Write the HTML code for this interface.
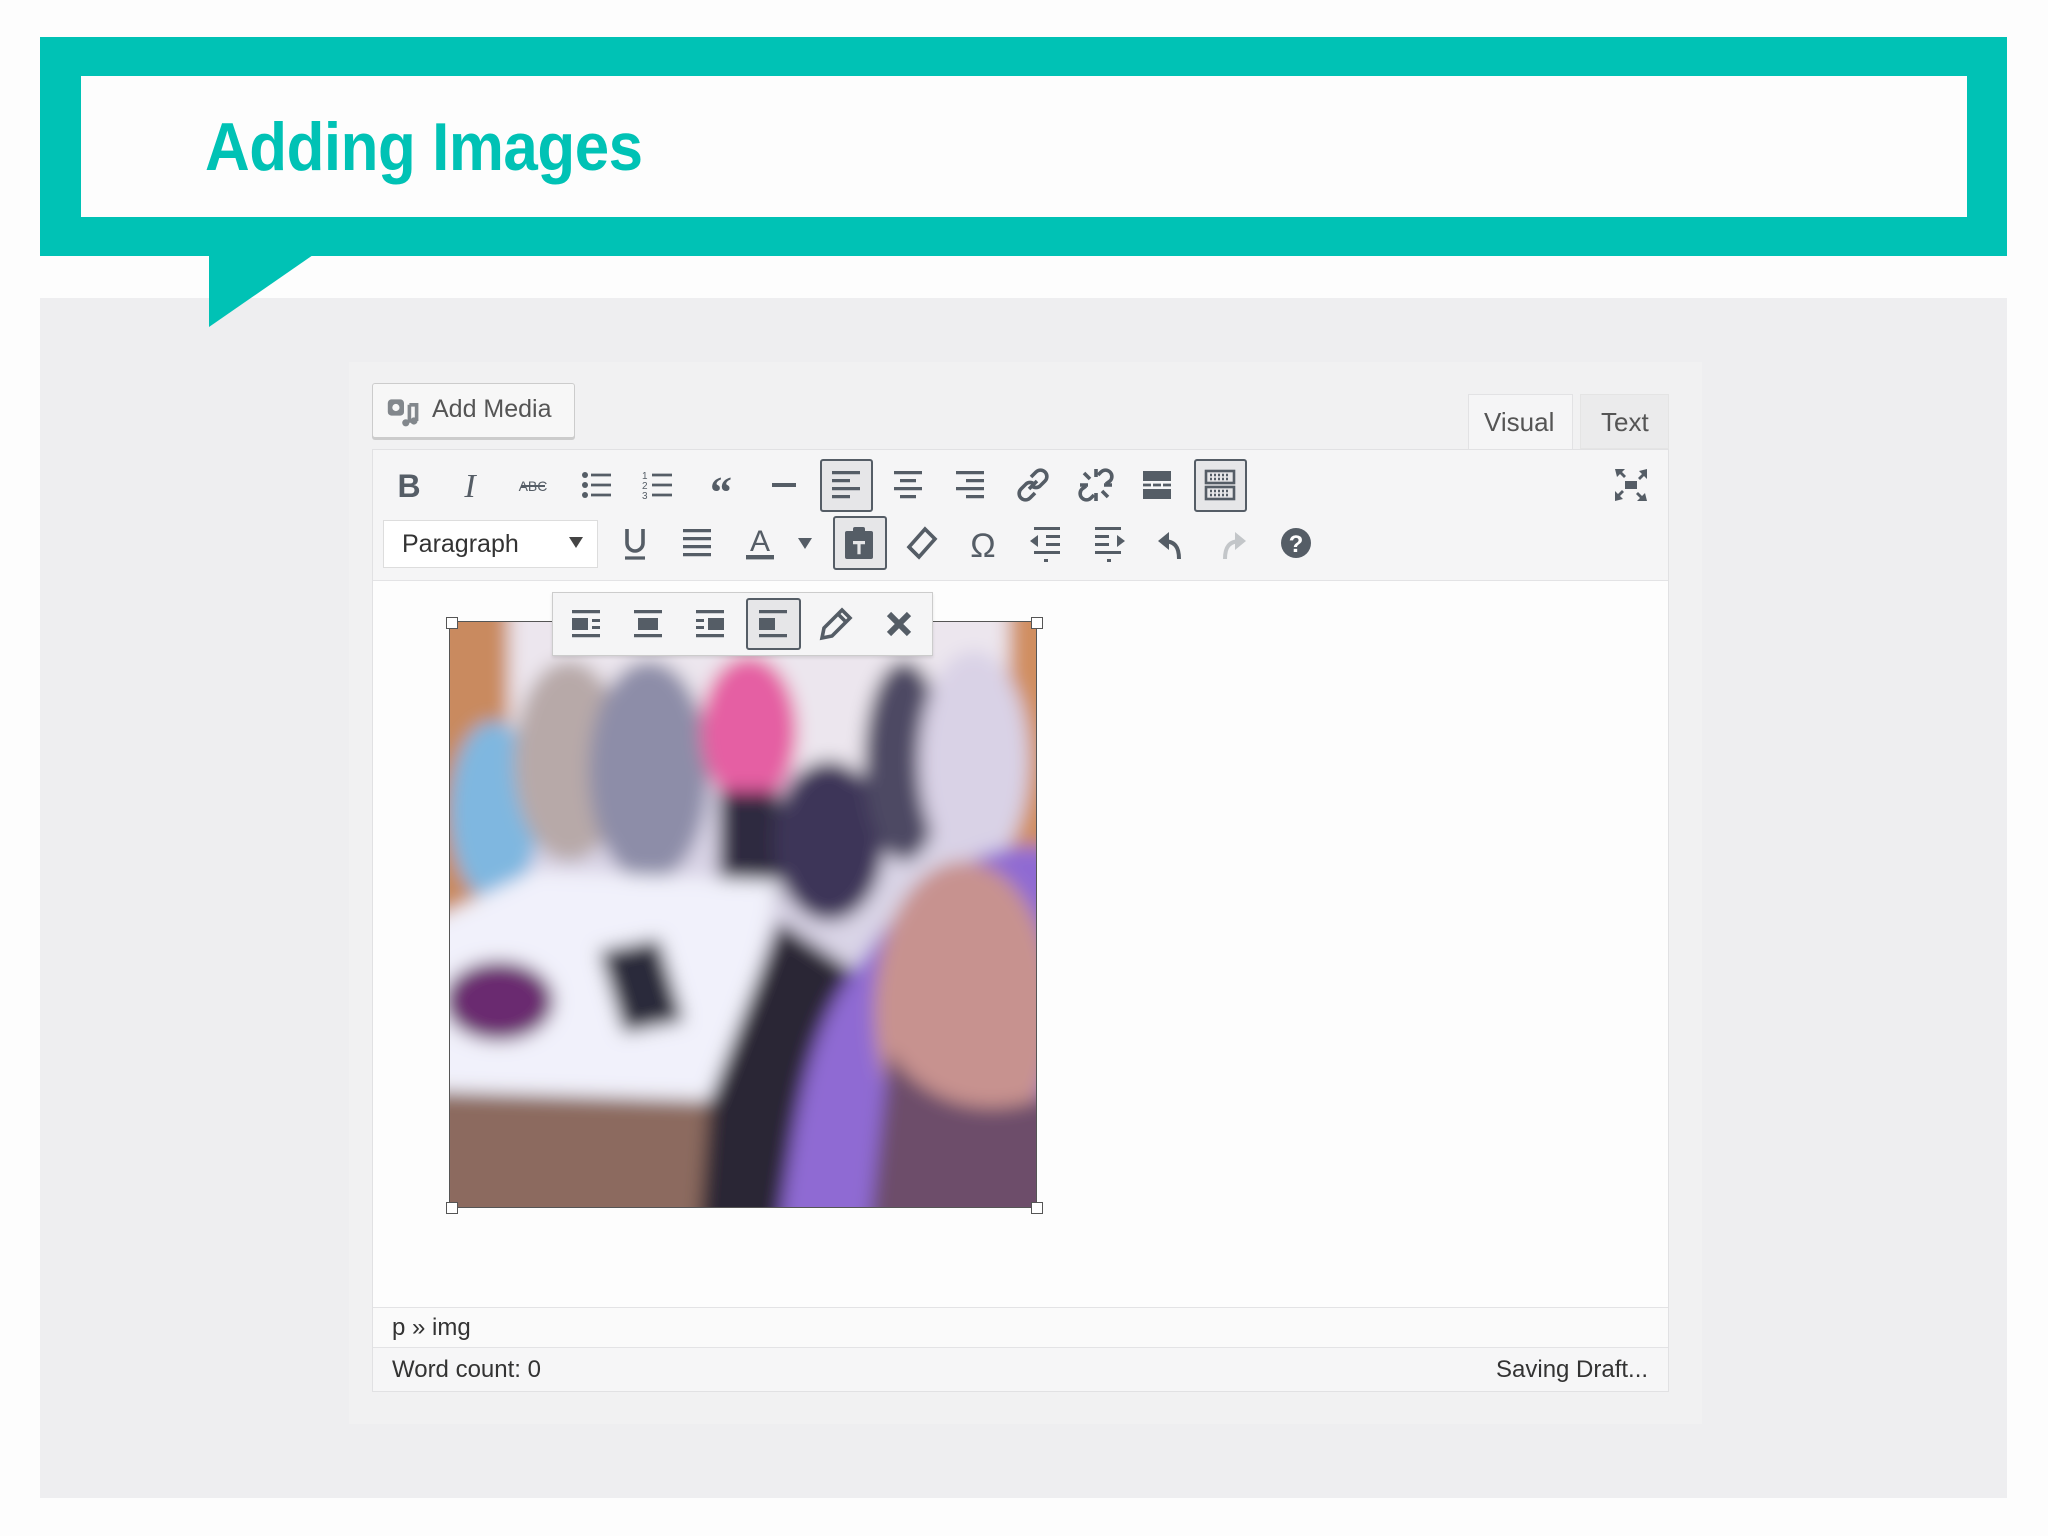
<!DOCTYPE html>
<html><head><meta charset="utf-8"><style>
*{margin:0;padding:0;box-sizing:border-box}
body{width:2048px;height:1536px;background:#fdfdfd;position:relative;overflow:hidden;font-family:"Liberation Sans",sans-serif;color:#32373c}
.a{position:absolute}
.ic{position:absolute;width:40px;height:40px;margin-left:-20px;margin-top:-20px}
.ic svg{width:40px;height:40px;display:block}
.btn{position:absolute;border:2px solid #555d66;border-radius:3px;background:#e6e6e8}
</style></head><body>
<div class="a" style="left:40px;top:298px;width:1967px;height:1200px;background:#eeeef0"></div>
<div class="a" style="left:40px;top:37px;width:1967px;height:219px;background:#00c2b5"></div>
<div class="a" style="left:81px;top:76px;width:1886px;height:141px;background:#fdfdfd"></div>
<svg class="a" style="left:209px;top:255px" width="106" height="73"><polygon points="0,0 104,0 0,72" fill="#00c2b5"/></svg>
<div class="a" style="left:205px;top:108px;font-size:68px;font-weight:bold;color:#00c2b5;transform:scaleX(0.91);transform-origin:left top;letter-spacing:-0.5px">Adding Images</div>

<div class="a" style="left:349px;top:362px;width:1353px;height:1062px;background:#f1f1f2"></div>

<!-- Add Media -->
<div class="a" style="left:372px;top:383px;width:203px;height:55px;border:1px solid #ccc;border-radius:3px;background:#f7f7f7;box-shadow:0 2px 0 #ccc"></div>
<svg class="a" style="left:386px;top:394px" width="36" height="36" viewBox="0 0 20 20"><rect x="1" y="3" width="9" height="9" rx="2" fill="#82878c"/><circle cx="5.5" cy="7.5" r="2" fill="#f7f7f7"/><path d="M13 6v10M13 6h4v9" stroke="#82878c" stroke-width="2" fill="none"/><circle cx="11" cy="16" r="2" fill="#82878c"/><circle cx="15.5" cy="15" r="2" fill="#82878c"/></svg>
<div class="a" style="left:432px;top:395px;font-size:25px;color:#555">Add Media</div>

<!-- tabs -->
<div class="a" style="left:1468px;top:394px;width:105px;height:58px;background:#f5f5f6;border:1px solid #e2e2e4;border-bottom:none"></div>
<div class="a" style="left:1484px;top:407px;font-size:26px;color:#555">Visual</div>
<div class="a" style="left:1580px;top:394px;width:89px;height:55px;background:#ebebec;border:1px solid #e4e4e4"></div>
<div class="a" style="left:1601px;top:407px;font-size:26px;color:#555">Text</div>

<!-- editor -->
<div class="a" style="left:372px;top:449px;width:1297px;height:943px;border:1px solid #e1e1e3;background:#f5f5f6"></div>
<div class="a" style="left:373px;top:580px;width:1295px;height:727px;background:#fdfdfd;border-top:1px solid #e3e3e5"></div>
<div class="a" style="left:373px;top:1307px;width:1295px;height:40px;border-top:1px solid #e3e3e5;background:#fafafa"></div>
<div class="a" style="left:392px;top:1314px;font-size:24px;color:#333">p » img</div>
<div class="a" style="left:373px;top:1347px;width:1295px;height:44px;border-top:1px solid #e3e3e5;background:#f6f6f7"></div>
<div class="a" style="left:392px;top:1356px;font-size:24px;color:#333">Word count: 0</div>
<div class="a" style="left:1496px;top:1356px;font-size:24px;color:#333">Saving Draft...</div>

<!-- row1 -->
<div class="btn" style="left:820px;top:459px;width:53px;height:53px"></div>
<div class="btn" style="left:1194px;top:459px;width:53px;height:53px"></div>
<div class="ic" style="left:409px;top:485px"><svg viewBox="0 0 20 20"><text x="10" y="16" text-anchor="middle" font-family="Liberation Sans" font-weight="bold" font-size="16" fill="#555d66">B</text></svg></div>
<div class="ic" style="left:470px;top:485px"><svg viewBox="0 0 20 20"><text x="10" y="16" text-anchor="middle" font-family="Liberation Serif" font-style="italic" font-size="17" fill="#555d66">I</text></svg></div>
<div class="ic" style="left:533px;top:485px"><svg viewBox="0 0 20 20"><text x="10" y="13" text-anchor="middle" font-family="Liberation Sans" font-size="7" fill="#555d66">ABC</text><path d="M4 10.5h12" stroke="#555d66" stroke-width="1"/></svg></div>
<div class="ic" style="left:597px;top:485px"><svg viewBox="0 0 20 20" fill="#555d66"><circle cx="4" cy="5" r="1.5"/><circle cx="4" cy="10" r="1.5"/><circle cx="4" cy="15" r="1.5"/><path d="M7 4.3h10v1.4H7zM7 9.3h10v1.4H7zM7 14.3h10v1.4H7z"/></svg></div>
<div class="ic" style="left:658px;top:485px"><svg viewBox="0 0 20 20" fill="#555d66"><text x="2" y="7" font-size="5" font-family="Liberation Sans">1</text><text x="2" y="12" font-size="5" font-family="Liberation Sans">2</text><text x="2" y="17" font-size="5" font-family="Liberation Sans">3</text><path d="M7 4.3h10v1.4H7zM7 9.3h10v1.4H7zM7 14.3h10v1.4H7z"/></svg></div>
<div class="ic" style="left:721px;top:485px"><svg viewBox="0 0 20 20"><text x="10" y="21" text-anchor="middle" font-family="Liberation Serif" font-weight="bold" font-size="22" fill="#555d66">“</text></svg></div>
<div class="ic" style="left:784px;top:485px"><svg viewBox="0 0 20 20"><path d="M4 10h12" stroke="#555d66" stroke-width="2"/></svg></div>
<div class="ic" style="left:846px;top:485px"><svg viewBox="0 0 20 20" fill="#555d66"><path d="M3 3h14v1.6H3zM3 7h9v1.6H3zM3 11h14v1.6H3zM3 15h9v1.6H3z"/></svg></div>
<div class="ic" style="left:908px;top:485px"><svg viewBox="0 0 20 20" fill="#555d66"><path d="M3 3h14v1.6H3zM6 7h8v1.6H6zM3 11h14v1.6H3zM6 15h8v1.6H6z"/></svg></div>
<div class="ic" style="left:970px;top:485px"><svg viewBox="0 0 20 20" fill="#555d66"><path d="M3 3h14v1.6H3zM8 7h9v1.6H8zM3 11h14v1.6H3zM8 15h9v1.6H8z"/></svg></div>
<div class="ic" style="left:1033px;top:485px"><svg viewBox="0 0 20 20" fill="none" stroke="#555d66" stroke-width="1.8"><path d="M9 6l2.5-2.5a3 3 0 014.5 4.5L13.5 10.5a3 3 0 01-4 0"/><path d="M11 14l-2.5 2.5a3 3 0 01-4.5-4.5L6.5 9.5a3 3 0 014 0"/><path d="M8 12l4-4"/></svg></div>
<div class="ic" style="left:1096px;top:485px"><svg viewBox="0 0 20 20" fill="none" stroke="#555d66" stroke-width="1.8"><path d="M11 5l1.5-1.5a3 3 0 014.5 4.5L15 9.5"/><path d="M9 15l-1.5 1.5a3 3 0 01-4.5-4.5L5 10.5"/><path d="M10 2v4M2 10h4M18 10h-4M10 18v-4M4 4l3 3M16 16l-3-3"/></svg></div>
<div class="ic" style="left:1157px;top:485px"><svg viewBox="0 0 20 20" fill="#555d66"><path d="M3 3h14v5H3zM3 9.3h4v1.4H3zM8 9.3h4v1.4H8zM13 9.3h4v1.4h-4zM3 12h14v5H3z"/></svg></div>
<div class="ic" style="left:1220px;top:485px"><svg viewBox="0 0 20 20" fill="none" stroke="#555d66" stroke-width="1.3"><rect x="3" y="3" width="14" height="6"/><rect x="3" y="11" width="14" height="6"/><path d="M5 5h10M5 7h10M5 13h10M5 15h10" stroke-dasharray="1 1"/></svg></div>
<div class="ic" style="left:1631px;top:485px"><svg viewBox="0 0 20 20" fill="#555d66"><rect x="7" y="8" width="6" height="4"/><path d="M2 2h5l-1.5 1.5 2 2-1 1-2-2L3 6zM18 2v5l-1.5-1.5-2 2-1-1 2-2L14 3zM2 18v-5l1.5 1.5 2-2 1 1-2 2L6 17zM18 18h-5l1.5-1.5-2-2 1-1 2 2L17 14z"/></svg></div>

<!-- row2 -->
<div class="a" style="left:383px;top:520px;width:215px;height:48px;border:1px solid #ddd;background:#fff"></div>
<div class="a" style="left:402px;top:530px;font-size:25px;color:#333">Paragraph</div>
<div class="a" style="left:569px;top:537px;width:0;height:0;border-left:7px solid transparent;border-right:7px solid transparent;border-top:11px solid #444"></div>
<div class="btn" style="left:833px;top:516px;width:54px;height:54px"></div>
<div class="ic" style="left:635px;top:543px"><svg viewBox="0 0 20 20" fill="none" stroke="#555d66" stroke-width="1.8"><path d="M6 3v7a4 4 0 008 0V3"/><path d="M5 17.5h10" stroke-width="1.6"/></svg></div>
<div class="ic" style="left:697px;top:543px"><svg viewBox="0 0 20 20" fill="#555d66"><path d="M3 3h14v1.6H3zM3 7h14v1.6H3zM3 11h14v1.6H3zM3 15h14v1.6H3z"/></svg></div>
<div class="ic" style="left:760px;top:543px"><svg viewBox="0 0 20 20"><text x="10" y="14" text-anchor="middle" font-family="Liberation Sans" font-size="15" fill="#555d66">A</text><rect x="3" y="16" width="14" height="2.2" fill="#555d66"/></svg></div>
<div class="a" style="left:798px;top:538px;width:0;height:0;border-left:7px solid transparent;border-right:7px solid transparent;border-top:11px solid #555d66"></div>
<div class="ic" style="left:859px;top:543px"><svg viewBox="0 0 20 20" fill="#555d66"><rect x="3" y="4" width="14" height="14" rx="1"/><rect x="7" y="2" width="6" height="4" rx="1"/><path d="M7 9h6v1.6H10.8v5H9.2v-5H7z" fill="#e6e6e8"/></svg></div>
<div class="ic" style="left:921px;top:543px"><svg viewBox="0 0 20 20" fill="none" stroke="#555d66" stroke-width="1.8"><path d="M12 3l5 5-8 9-5-5z"/><path d="M4 12l5 5" /></svg></div>
<div class="ic" style="left:983px;top:543px"><svg viewBox="0 0 20 20"><text x="10" y="17" text-anchor="middle" font-family="Liberation Sans" font-size="17" fill="#555d66">Ω</text></svg></div>
<div class="ic" style="left:1046px;top:543px"><svg viewBox="0 0 20 20" fill="#555d66"><path d="M4 2h13v1.5H4zM10 6h7v1.5h-7zM10 10h7v1.5h-7zM4 14h13v1.5H4zM9 18h2v1.5H9zM2 9l4-3v6z"/></svg></div>
<div class="ic" style="left:1109px;top:543px"><svg viewBox="0 0 20 20" fill="#555d66"><path d="M3 2h13v1.5H3zM3 6h7v1.5H3zM3 10h7v1.5H3zM3 14h13v1.5H3zM9 18h2v1.5H9zM18 9l-4-3v6z"/></svg></div>
<div class="ic" style="left:1171px;top:543px"><svg viewBox="0 0 20 20" fill="none" stroke="#555d66" stroke-width="2"><path d="M14 18c0-6-2-9-8-9"/><path d="M9 4.5L3.5 9 9 13.5z" fill="#555d66" stroke="none"/></svg></div>
<div class="ic" style="left:1233px;top:543px"><svg viewBox="0 0 20 20" fill="none" stroke="#c3c6c9" stroke-width="2"><path d="M6 18c0-6 2-9 8-9"/><path d="M11 4.5L16.5 9 11 13.5z" fill="#c3c6c9" stroke="none"/></svg></div>
<div class="ic" style="left:1296px;top:543px"><svg viewBox="0 0 20 20"><circle cx="10" cy="10" r="7.5" fill="#555d66"/><text x="10" y="14.5" text-anchor="middle" font-family="Liberation Sans" font-weight="bold" font-size="12" fill="#fff">?</text></svg></div>

<!-- image -->
<svg class="a" style="left:449px;top:621px" width="588" height="587" viewBox="0 0 588 587">
<defs><filter id="b" x="-5%" y="-5%" width="110%" height="110%"><feGaussianBlur stdDeviation="9"/></filter><clipPath id="c"><rect width="588" height="587"/></clipPath></defs>
<g clip-path="url(#c)"><g filter="url(#b)">
<rect x="-20" y="-20" width="628" height="627" fill="#d9d4e6"/>
<rect x="-20" y="-20" width="80" height="320" fill="#c98a5e"/>
<rect x="560" y="-20" width="48" height="270" fill="#d08e60"/>
<rect x="60" y="-20" width="500" height="170" fill="#ece6ee"/>
<rect x="-20" y="400" width="628" height="207" fill="#8c6a5f"/>
<ellipse cx="45" cy="190" rx="45" ry="90" fill="#7fb7e0"/>
<ellipse cx="120" cy="140" rx="55" ry="100" fill="#b7a9a8"/>
<ellipse cx="200" cy="150" rx="60" ry="110" fill="#8d8da8"/>
<ellipse cx="300" cy="110" rx="48" ry="75" fill="#e55fa3"/>
<rect x="270" y="170" width="60" height="110" fill="#2d2940"/>
<ellipse cx="380" cy="220" rx="55" ry="80" fill="#3c3658"/>
<ellipse cx="455" cy="140" rx="40" ry="100" fill="#4d4a63"/>
<ellipse cx="525" cy="140" rx="55" ry="110" fill="#d9d2e6"/>
<polygon points="-20,300 85,250 330,260 280,480 -20,470" fill="#f1f1fb"/>
<polygon points="150,330 210,318 235,400 175,412" fill="#2a2a3a"/>
<ellipse cx="50" cy="380" rx="55" ry="40" fill="#6a2a70"/>
<polygon points="260,480 330,300 420,360 460,607 250,607" fill="#2a2836"/>
<path d="M330 607C350 470 360 400 420 330 470 250 560 210 608 230V607z" fill="#8f6bd3"/>
<ellipse cx="515" cy="390" rx="90" ry="150" fill="#c7928f"/>
<path d="M440 430c40 60 110 70 168 40v137H420z" fill="#6d4d6a"/>
</g></g>
</svg>
<div class="a" style="left:449px;top:621px;width:588px;height:587px;border:1px solid #555"></div>
<div class="a" style="left:446px;top:617px;width:12px;height:12px;border:1px solid #555;background:#fff"></div>
<div class="a" style="left:1031px;top:617px;width:12px;height:12px;border:1px solid #555;background:#fff"></div>
<div class="a" style="left:446px;top:1202px;width:12px;height:12px;border:1px solid #555;background:#fff"></div>
<div class="a" style="left:1031px;top:1202px;width:12px;height:12px;border:1px solid #555;background:#fff"></div>

<!-- image toolbar -->
<div class="a" style="left:552px;top:592px;width:381px;height:64px;background:#f5f5f6;border:1px solid #ccc;box-shadow:0 2px 3px rgba(0,0,0,.1)"></div>
<div class="btn" style="left:746px;top:598px;width:55px;height:52px"></div>
<div class="ic" style="left:586px;top:624px"><svg viewBox="0 0 20 20" fill="#555d66"><path d="M3 3h14v1.6H3zM3 7h8v6H3zM13 7.5h4v1.5h-4zM13 11h4v1.5h-4zM3 15h14v1.6H3z"/></svg></div>
<div class="ic" style="left:648px;top:624px"><svg viewBox="0 0 20 20" fill="#555d66"><path d="M3 3h14v1.6H3zM5 7h10v6H5zM3 15h14v1.6H3z"/></svg></div>
<div class="ic" style="left:710px;top:624px"><svg viewBox="0 0 20 20" fill="#555d66"><path d="M3 3h14v1.6H3zM9 7h8v6H9zM3 7.5h4v1.5H3zM3 11h4v1.5H3zM3 15h14v1.6H3z"/></svg></div>
<div class="ic" style="left:773px;top:624px"><svg viewBox="0 0 20 20" fill="#555d66"><path d="M3 3h14v1.6H3zM3 7h8v6H3zM3 15h14v1.6H3z"/></svg></div>
<div class="ic" style="left:836px;top:624px"><svg viewBox="0 0 20 20" fill="none" stroke="#555d66" stroke-width="1.8"><path d="M13 3l4 4-9 9-5 1 1-5z"/><path d="M11 5l4 4"/></svg></div>
<div class="ic" style="left:899px;top:624px"><svg viewBox="0 0 20 20"><path d="M5 5l10 10M15 5L5 15" stroke="#555d66" stroke-width="3"/></svg></div>
</body></html>
